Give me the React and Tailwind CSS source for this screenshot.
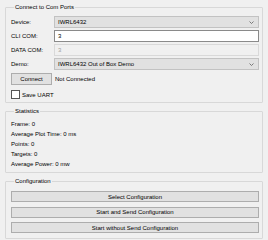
import { useState } from 'react'

const stats = [
  'Frame: 0',
  'Average Plot Time: 0 ms',
  'Points: 0',
  'Targets: 0',
  'Average Power: 0 mw',
]

function Chevron() {
  return (
    <svg width="5" height="3" viewBox="0 0 5 3" className="shrink-0">
      <polyline points="0.5,0.5 2.5,2.5 4.5,0.5" fill="none" stroke="#606060" strokeWidth="0.8" />
    </svg>
  )
}

function Combo({ value }) {
  return (
    <div className="flex-1 h-[12px] flex items-center justify-between pl-[3px] pr-[4px] bg-[#e1e1e1] border border-[#c2c2c2]">
      <span>{value}</span>
      <Chevron />
    </div>
  )
}

function Row({ label, children }) {
  return (
    <div className="flex items-center">
      <div className="w-[43px] shrink-0">{label}</div>
      {children}
    </div>
  )
}

function Group({ title, className = '', children }) {
  return (
    <fieldset className={`ml-[5px] w-[258px] border border-[#d8d8d8] rounded-[1px] pl-[5px] pr-[3px] ${className}`}>
      <legend className="ml-[3px] px-[1px] leading-[8px]">{title}</legend>
      {children}
    </fieldset>
  )
}

export default function App() {
  const [saveUart, setSaveUart] = useState(false)

  return (
    <div className="w-[268px] h-[240px] overflow-hidden bg-[#f0f0f0] pt-[3px] text-[6px] leading-[10px] text-black font-['Liberation_Sans',Arial,sans-serif]">
      <Group title="Connect to Com Ports" className="pt-[5px] pb-[3px]">
        <div className="flex flex-col gap-[2px]">
          <Row label="Device:">
            <Combo value="IWRL6432" />
          </Row>
          <Row label="CLI COM:">
            <div className="flex-1 h-[12px] flex items-center pl-[3px] bg-white border border-[#8a8a8a]">3</div>
          </Row>
          <Row label="DATA COM:">
            <div className="flex-1 h-[12px] flex items-center pl-[3px] bg-[#f0f0f0] border border-[#d9d9d9] text-[#a0a0a0]">3</div>
          </Row>
          <Row label="Demo:">
            <Combo value="IWRL6432 Out of Box Demo" />
          </Row>
        </div>
        <div className="mt-[3px] flex items-center gap-[3px]">
          <button className="w-[41px] h-[12px] flex items-center justify-center bg-[#e1e1e1] border border-[#adadad]">Connect</button>
          <span>Not Connected</span>
        </div>
        <label className="mt-[5px] h-[9px] flex items-center gap-[2px]">
          <span
            className="w-[9px] h-[9px] border border-[#555555] bg-white flex items-center justify-center"
            onClick={() => setSaveUart(!saveUart)}
          >
            {saveUart && <span className="w-[5px] h-[5px] bg-[#333333]" />}
          </span>
          <span>Save UART</span>
        </label>
      </Group>

      <Group title="Statistics" className="mt-[4px] pt-[4px] pb-[3px]">
        {stats.map(s => (
          <div key={s} className="h-[10px] flex items-center">{s}</div>
        ))}
      </Group>

      <Group title="Configuration" className="mt-[4px] pt-[6px] pb-[5px]">
        <div className="flex flex-col gap-[4.5px]">
          {['Select Configuration', 'Start and Send Configuration', 'Start without Send Configuration'].map(b => (
            <button key={b} className="w-full h-[11px] flex items-center justify-center bg-[#e1e1e1] border border-[#adadad]">{b}</button>
          ))}
        </div>
      </Group>
    </div>
  )
}
